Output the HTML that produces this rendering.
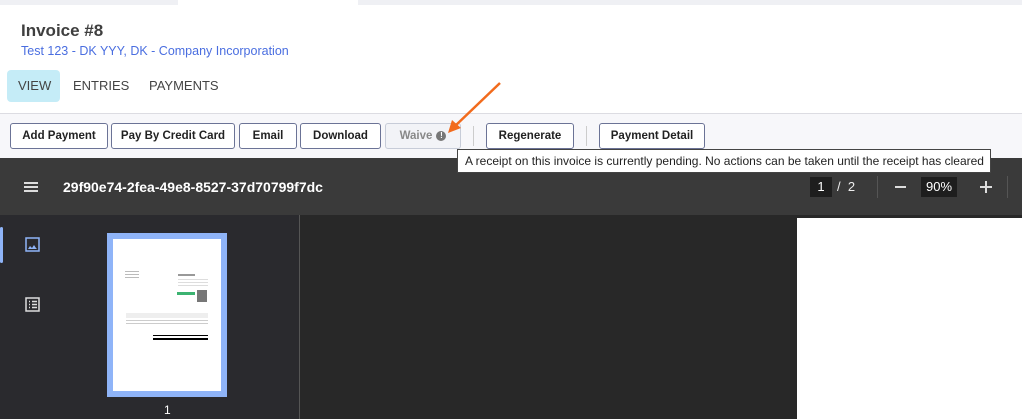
<!DOCTYPE html>
<html><head><style>
*{margin:0;padding:0;box-sizing:border-box}
body{width:1022px;height:419px;overflow:hidden;background:#fff;font-family:"Liberation Sans",sans-serif;position:relative}
.a{position:absolute}
.btn{position:absolute;top:123px;height:26px;border:1px solid #6b7396;border-radius:3px;background:#fff;font-size:11.5px;font-weight:bold;color:#222;display:flex;align-items:center;justify-content:center}
</style></head><body>
<div class="a" style="left:0;top:0;width:1022px;height:5px;background:#eff0f4"></div>
<div class="a" style="left:178px;top:0;width:180px;height:5px;background:#fff"></div>
<div class="a" style="left:21px;top:21px;font-size:17px;font-weight:bold;color:#3f3f3f">Invoice #8</div>
<div class="a" style="left:21px;top:44px;font-size:12.5px;color:#4a6ee0">Test 123 - DK YYY, DK - Company Incorporation</div>
<div class="a" style="left:7px;top:70px;width:53px;height:32px;background:#c5ecf7;border-radius:4px"></div>
<div class="a" style="left:18px;top:78px;font-size:13px;color:#444">VIEW</div>
<div class="a" style="left:73px;top:78px;font-size:13px;color:#444">ENTRIES</div>
<div class="a" style="left:149px;top:78px;font-size:13px;color:#444">PAYMENTS</div>
<div class="a" style="left:0;top:113px;width:1022px;height:45px;background:#f7f7fa;border-top:1px solid #dcdce2"></div>
<div class="btn" style="left:10px;width:98px">Add Payment</div>
<div class="btn" style="left:111px;width:124px">Pay By Credit Card</div>
<div class="btn" style="left:239px;width:58px">Email</div>
<div class="btn" style="left:300px;width:81px">Download</div>
<div class="btn" style="left:385px;width:76px;background:#f2f3f7;border-color:#c7ccd8;color:#888">Waive <span style="display:inline-block;width:10px;height:10px;border-radius:50%;background:#777;color:#fff;font-size:8px;line-height:10px;text-align:center;margin-left:4px">!</span></div>
<div class="a" style="left:473px;top:126px;width:1px;height:20px;background:#ccc"></div>
<div class="btn" style="left:486px;width:88px">Regenerate</div>
<div class="a" style="left:586px;top:126px;width:1px;height:20px;background:#ccc"></div>
<div class="btn" style="left:599px;width:106px">Payment Detail</div>
<div class="a" style="left:0;top:158px;width:1022px;height:57px;background:#3a3a3a"></div>
<div class="a" style="left:0;top:215px;width:300px;height:204px;background:#2a2a2e"></div>
<div class="a" style="left:299px;top:215px;width:1px;height:204px;background:#555"></div>
<div class="a" style="left:300px;top:215px;width:722px;height:204px;background:#282828"></div>
<div class="a" style="left:797px;top:218px;width:225px;height:201px;background:#fff"></div>
<div class="a" style="left:24px;top:182px;width:14px;height:2px;background:#ddd;box-shadow:0 4px 0 #ddd,0 8px 0 #ddd"></div>
<div class="a" style="left:63px;top:179px;font-size:14px;font-weight:bold;color:#fff">29f90e74-2fea-49e8-8527-37d70799f7dc</div>
<div class="a" style="left:810px;top:177px;width:22px;height:20px;background:#1e1e1e;color:#fff;font-size:13px;text-align:center;line-height:20px">1</div>
<div class="a" style="left:837px;top:179px;color:#eee;font-size:13px">/&nbsp; 2</div>
<div class="a" style="left:877px;top:176px;width:1px;height:22px;background:#555"></div>
<div class="a" style="left:895px;top:186px;width:11px;height:2px;background:#ddd"></div>
<div class="a" style="left:921px;top:177px;width:36px;height:20px;background:#1e1e1e;color:#fff;font-size:13px;text-align:center;line-height:20px">90%</div>
<div class="a" style="left:980px;top:186px;width:12px;height:2px;background:#ddd"></div>
<div class="a" style="left:985px;top:181px;width:2px;height:12px;background:#ddd"></div>
<div class="a" style="left:1007px;top:176px;width:1px;height:22px;background:#555"></div>
<div class="a" style="left:0;top:227px;width:3px;height:36px;background:#8fb4f8;border-radius:2px"></div>
<svg class="a" style="left:25px;top:237px" width="16" height="16"><rect x="1" y="1" width="13" height="13" fill="none" stroke="#8fb4f8" stroke-width="1.5"/><path d="M3 12 L5 9 L7 11 L9 8 L11 11 L12 12Z" fill="#8fb4f8"/></svg>
<svg class="a" style="left:25px;top:297px" width="16" height="16"><rect x="1" y="1" width="13" height="13" fill="none" stroke="#ddd" stroke-width="1.5"/><path d="M4 4.5h1M7 4.5h5M4 7.5h1M7 7.5h5M4 10.5h1M7 10.5h5" stroke="#ddd" stroke-width="1.5"/></svg>
<div class="a" style="left:107px;top:233px;width:120px;height:164px;background:#8fb4f8"></div>
<div class="a" style="left:113px;top:239px;width:108px;height:152px;background:#fff"></div>
<div class="a" style="left:125px;top:271px;width:14px;height:1px;background:#bbb;box-shadow:0 3px 0 #bbb,0 6px 0 #bbb"></div>
<div class="a" style="left:178px;top:274px;width:17px;height:2px;background:#999"></div>
<div class="a" style="left:178px;top:279px;width:30px;height:9px;background:repeating-linear-gradient(#ddd 0 1px,#fff 1px 3px)"></div>
<div class="a" style="left:177px;top:292px;width:18px;height:3px;background:#3cb371"></div>
<div class="a" style="left:197px;top:290px;width:10px;height:12px;background:#777"></div>
<div class="a" style="left:126px;top:313px;width:82px;height:5px;background:#eee"></div>
<div class="a" style="left:126px;top:320px;width:82px;height:4px;background:repeating-linear-gradient(#ccc 0 1px,#fff 1px 3px)"></div>
<div class="a" style="left:153px;top:335px;width:55px;height:1px;background:#000"></div>
<div class="a" style="left:153px;top:338px;width:55px;height:2px;background:#000"></div>
<div class="a" style="left:164px;top:403px;color:#fff;font-size:12px">1</div>
<div class="a" style="left:457px;top:149px;width:534px;height:24px;background:#fff;border:1px solid #444;font-size:12px;color:#222;line-height:22px;padding-left:7px;white-space:nowrap">A receipt on this invoice is currently pending. No actions can be taken until the receipt has cleared</div>
<svg class="a" style="left:440px;top:80px" width="70" height="60"><line x1="60" y1="3" x2="14" y2="47" stroke="#f26b1d" stroke-width="2.5"/><polygon points="8,53 12,40 21,48" fill="#f26b1d"/></svg>
</body></html>
